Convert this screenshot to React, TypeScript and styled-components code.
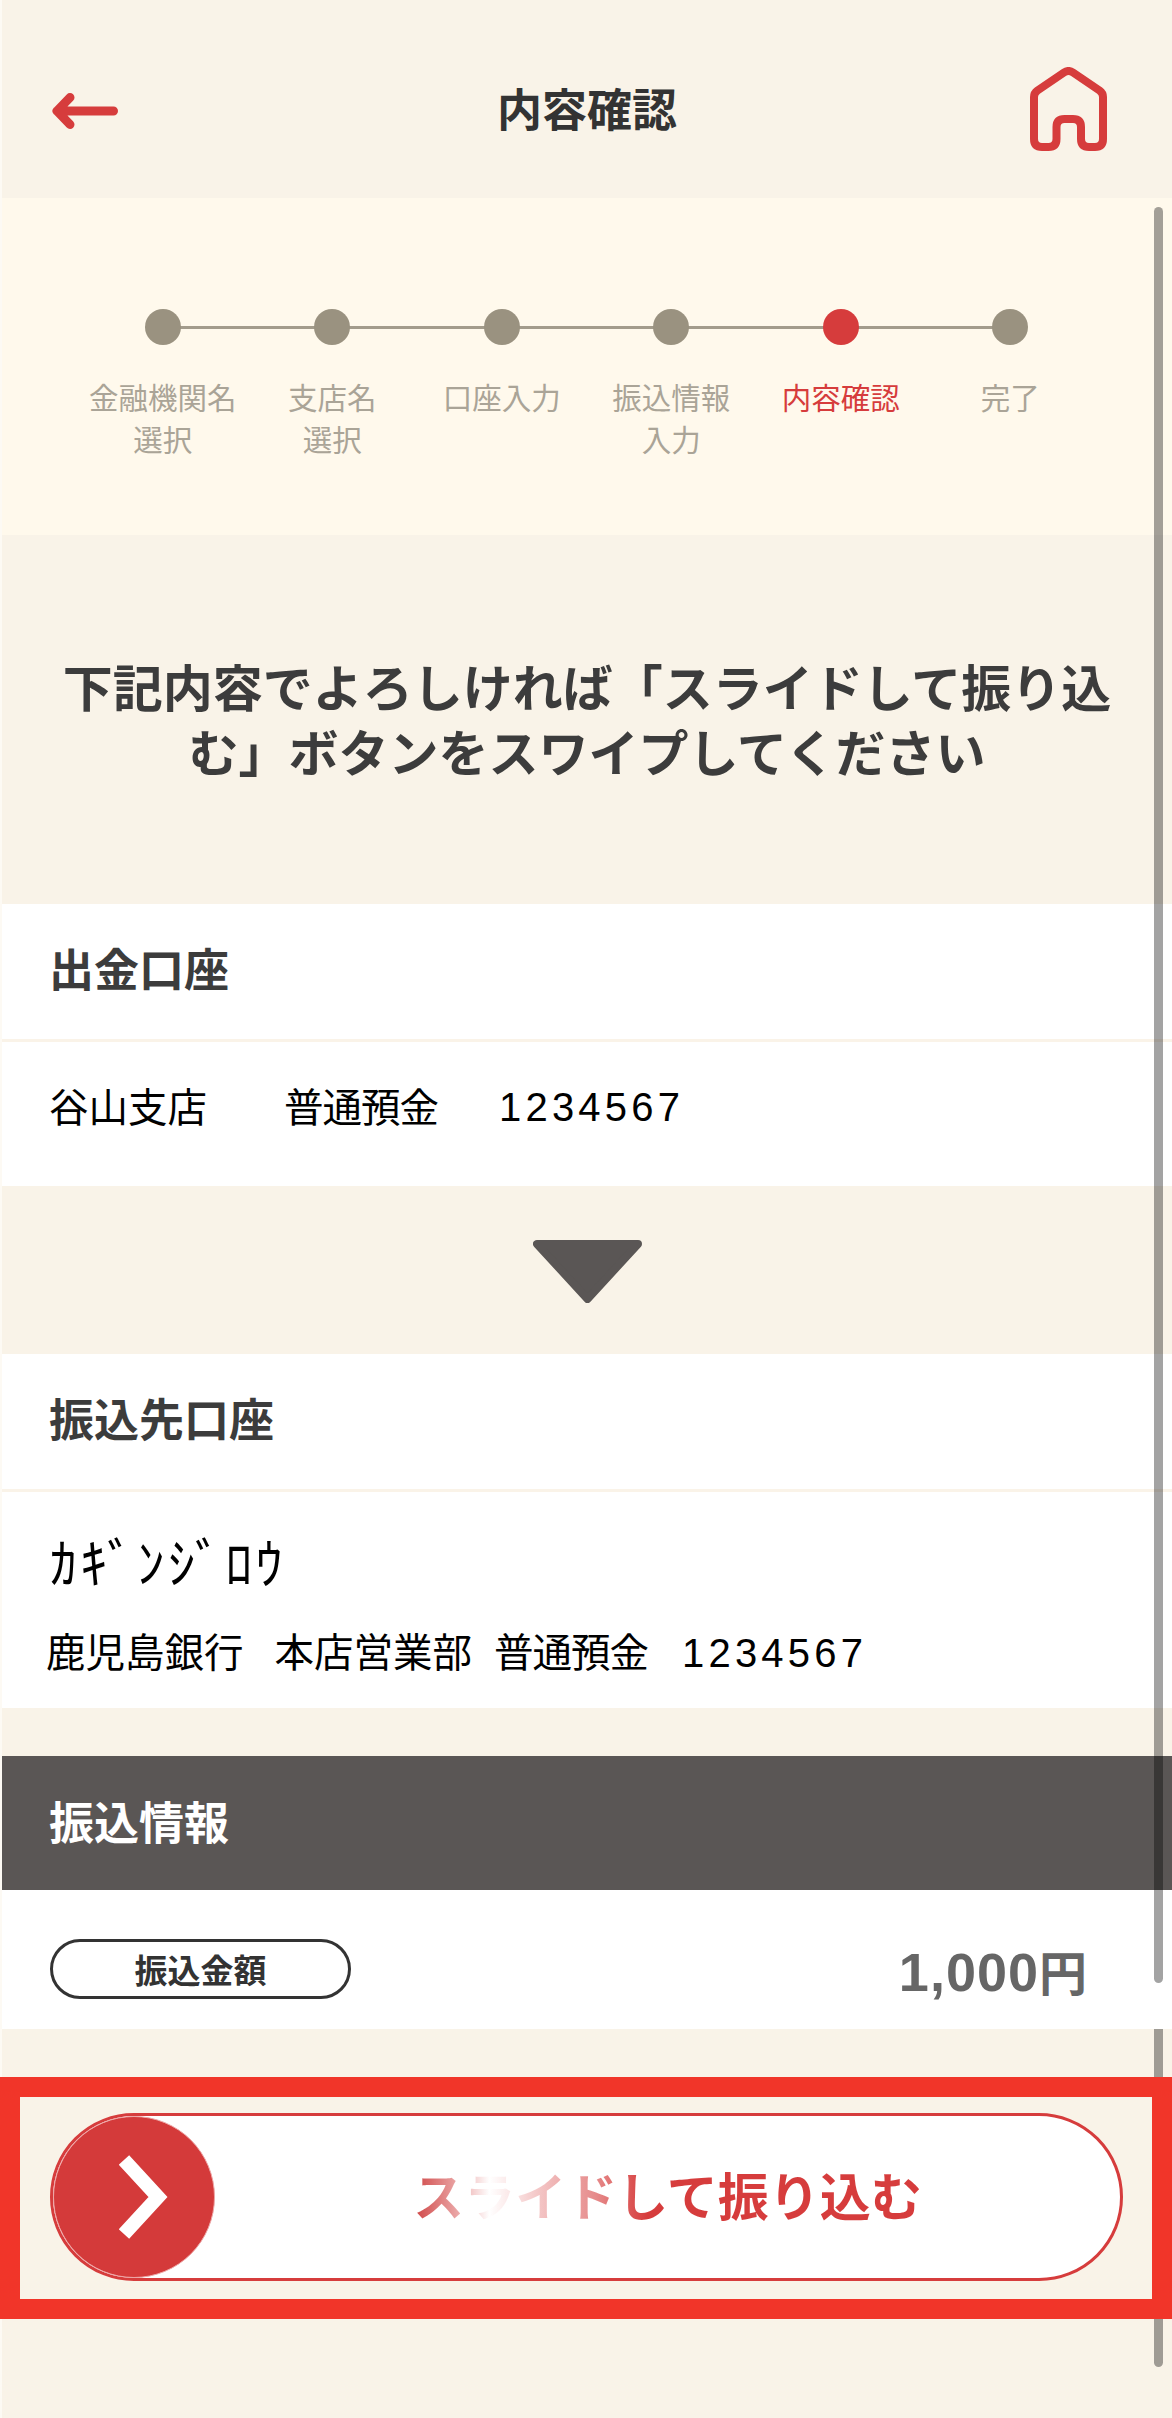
import styled, { createGlobalStyle } from "styled-components";

const steps = [
  ["金融機関名", "選択"],
  ["支店名", "選択"],
  ["口座入力"],
  ["振込情報", "入力"],
  ["内容確認"],
  ["完了"],
];
const activeStep = 4;

function App() {
  return (
    <Page>
      <GlobalStyle />
      <ScrollThumb $top={207} $height={1776} />
      <ScrollThumb $top={2029} $height={338} $flatTop />

      <Content>
        <Header>
          <BackIcon viewBox="0 0 66 36" fill="none">
            <path d="M61.5 18H5M18 4.5 5 18l13 13.5" stroke="#d63c3c" strokeWidth="9" strokeLinecap="round" strokeLinejoin="round" />
          </BackIcon>
          <HeaderTitle>内容確認</HeaderTitle>
          <HomeIcon viewBox="0 0 77 84" fill="none">
            <path
              d="M4 30Q4 26 7.5 23.5L34 5.5Q38.5 2.5 43 5.5L69.5 23.5Q73 26 73 30V72Q73 80 65 80H59Q51 80 51 72V60Q51 52 43 52H34.5Q26.5 52 26.5 60V72Q26.5 80 18.5 80H12Q4 80 4 72Z"
              stroke="#d63c3c"
              strokeWidth="8"
              strokeLinejoin="round"
            />
          </HomeIcon>
        </Header>

        <Stepper>
          {steps.map((lines, i) => (
            <Step key={i} $last={i === steps.length - 1}>
              <Dot $active={i === activeStep} />
              <StepLabel $active={i === activeStep}>
                {lines.map((line) => (
                  <div key={line}>{line}</div>
                ))}
              </StepLabel>
            </Step>
          ))}
        </Stepper>

        <Lead>
          下記内容でよろしければ「スライドして振り込む」ボタンをスワイプしてください
        </Lead>

        <Card>
          <CardHead>出金口座</CardHead>
          <AccountRow>
            <span>谷山支店</span>
            <DepositType>普通預金</DepositType>
            <AccountDigits>1234567</AccountDigits>
          </AccountRow>
        </Card>

        <ArrowBand>
          <svg width="109" height="63" viewBox="0 0 109 63">
            <path d="M4 4H105L54.5 59Z" fill="#5a5655" stroke="#5a5655" strokeWidth="8" strokeLinejoin="round" />
          </svg>
        </ArrowBand>

        <Card>
          <CardHead>振込先口座</CardHead>
          <PayeeBody>
            <PayeeName>ｶｷﾞﾝｼﾞﾛｳ</PayeeName>
            <PayeeRow>
              <span>鹿児島銀行</span>
              <span>本店営業部</span>
              <PayeeType>普通預金</PayeeType>
              <Digits>1234567</Digits>
            </PayeeRow>
          </PayeeBody>
        </Card>

        <DarkHead>振込情報</DarkHead>
        <AmountRow>
          <AmountTag>振込金額</AmountTag>
          <Amount>
            1,000<Yen>円</Yen>
          </Amount>
        </AmountRow>

        <Highlight>
          <SlideButton>
            <Knob>
              <svg width="50" height="84" viewBox="0 0 50 84" fill="none">
                <path d="M5 5 39 42 5 79" stroke="#fff" strokeWidth="14" />
              </svg>
            </Knob>
            <SlideLabel>
              <SlideText>スライドして振り込む</SlideText>
            </SlideLabel>
          </SlideButton>
        </Highlight>
      </Content>
    </Page>
  );
}

export default App;

const GlobalStyle = createGlobalStyle`
  body {
    margin: 0;
    background: #fdfaf4;
    font-family: "Liberation Sans", "Noto Sans CJK JP", sans-serif;
  }
`;

const Page = styled.div`
  position: relative;
  width: 1172px;
  height: 2418px;
  box-sizing: border-box;
  padding-left: 2px;
  overflow: hidden;
  background: #fdfaf4;
`;

const Content = styled.main`
  height: 100%;
  background: #f9f3e8;
`;

const ScrollThumb = styled.div<{ $top: number; $height: number; $flatTop?: boolean }>`
  position: absolute;
  z-index: 1;
  left: 1154px;
  top: ${(p) => p.$top}px;
  width: 9px;
  height: ${(p) => p.$height}px;
  background: rgba(0, 0, 0, 0.36);
  border-radius: ${(p) => (p.$flatTop ? "0 0 5px 5px" : "5px")};
`;

const Header = styled.header`
  height: 198px;
  box-sizing: border-box;
  padding: 24px 56px 0;
  display: grid;
  grid-template-columns: 1fr auto 1fr;
  align-items: center;
`;

const BackIcon = styled.svg`
  width: 66px;
  height: 36px;
  margin-left: -6px;
`;

const HomeIcon = styled.svg`
  width: 77px;
  height: 84px;
  justify-self: end;
  margin: 0 9px 4px 0;
`;

const HeaderTitle = styled.h1`
  margin: 2px 0 0;
  font-size: 45px;
  line-height: 60px;
  font-weight: 700;
  color: #333;
`;

const Stepper = styled.div`
  height: 337px;
  box-sizing: border-box;
  padding: 111px 0 0 76px;
  background: #fff9ec;
  display: grid;
  grid-template-columns: repeat(6, 169.5px);
  align-items: start;
`;

const Step = styled.div<{ $last: boolean }>`
  position: relative;
  display: flex;
  flex-direction: column;
  align-items: center;

  &::after {
    content: "";
    display: ${(p) => (p.$last ? "none" : "block")};
    position: absolute;
    left: 50%;
    top: 17px;
    width: 100%;
    height: 3px;
    background: #a39c8c;
  }
`;

const Dot = styled.div<{ $active: boolean }>`
  position: relative;
  z-index: 1;
  width: 36px;
  height: 36px;
  border-radius: 50%;
  background: ${(p) => (p.$active ? "#d63c3c" : "#9a9280")};
`;

const StepLabel = styled.div<{ $active: boolean }>`
  margin-top: 33px;
  font-size: 29.5px;
  line-height: 42px;
  text-align: center;
  white-space: nowrap;
  color: ${(p) => (p.$active ? "#d63c3c" : "#aaa497")};
`;

const Lead = styled.p`
  margin: 0;
  height: 369px;
  box-sizing: border-box;
  padding: 123px 49px 0;
  font-size: 50px;
  line-height: 65px;
  font-weight: 700;
  text-align: center;
  color: #3c3c3c;
`;

const Card = styled.section`
  background: #fff;
`;

const CardHead = styled.h2`
  margin: 0;
  height: 138px;
  box-sizing: border-box;
  padding: 0 47px 8px;
  display: flex;
  align-items: center;
  font-size: 45px;
  font-weight: 700;
  color: #3c3c3c;
  border-bottom: 3px solid #faf3e8;
`;

const AccountRow = styled.div`
  height: 144px;
  box-sizing: border-box;
  padding: 0 0 20px 47px;
  display: flex;
  align-items: center;
  gap: 77px;
  font-size: 39.5px;
  color: #000;
`;

const DepositType = styled.span`
  letter-spacing: -1px;
`;

const Digits = styled.span`
  font-size: 40px;
  letter-spacing: 4.2px;
`;

const AccountDigits = styled(Digits)`
  margin: 6px 0 0 -16px;
`;

const ArrowBand = styled.div`
  height: 168px;
  box-sizing: border-box;
  padding-top: 54px;
  display: flex;
  justify-content: center;
  align-items: flex-start;
`;

const PayeeBody = styled.div`
  height: 216px;
  box-sizing: border-box;
  padding: 38px 0 0 44px;
`;

const PayeeName = styled.div`
  margin-left: 4px;
  font-size: 54px;
  line-height: 70px;
  letter-spacing: 3.3px;
  color: #000;
`;

const PayeeRow = styled.div`
  margin-top: 25px;
  display: flex;
  align-items: center;
  gap: 31px;
  font-size: 39.5px;
  line-height: 56px;
  color: #000;
`;

const PayeeType = styled(DepositType)`
  margin: 0 3px 0 -9px;
`;

const DarkHead = styled.h2`
  margin: 48px 0 0;
  height: 134px;
  box-sizing: border-box;
  padding: 0 47px 6px;
  display: flex;
  align-items: center;
  font-size: 45px;
  font-weight: 700;
  color: #fff;
  background: #5a5655;
`;

const AmountRow = styled.div`
  height: 139px;
  box-sizing: border-box;
  padding: 49px 85px 0 48px;
  display: flex;
  align-items: flex-start;
  justify-content: space-between;
  background: #fff;
`;

const AmountTag = styled.div`
  width: 301px;
  height: 60px;
  box-sizing: border-box;
  border: 3px solid #333;
  border-radius: 30px;
  display: flex;
  align-items: center;
  justify-content: center;
  font-size: 33px;
  font-weight: 700;
  color: #333;
`;

const Amount = styled.div`
  margin-top: 3px;
  font-size: 54px;
  line-height: 60px;
  font-weight: 700;
  letter-spacing: 1px;
  color: #666;
`;

const Yen = styled.span`
  font-size: 48px;
  letter-spacing: 0;
`;

const Highlight = styled.div`
  position: relative;
  z-index: 2;
  margin: 48px 0 0 -2px;
  width: 1172px;
  height: 242px;
  box-sizing: border-box;
  border: 20px solid #f13529;
  padding: 16px 29px 0 30px;
`;

const SlideButton = styled.div`
  height: 168px;
  box-sizing: border-box;
  border: 3px solid #d63c3c;
  border-radius: 84px;
  background: #fff;
  display: flex;
  align-items: center;
`;

const Knob = styled.div`
  width: 162px;
  height: 162px;
  box-sizing: border-box;
  flex: none;
  border-radius: 50%;
  background: #d43a3a;
  border: 1px solid #eea6a6;
  display: flex;
  align-items: center;
  justify-content: center;

  svg {
    margin-left: 20px;
  }
`;

const SlideLabel = styled.div`
  flex: 1;
  display: flex;
  justify-content: center;
  padding-top: 4px;
`;

const SlideText = styled.span`
  font-size: 51px;
  line-height: 70px;
  font-weight: 700;
  color: transparent;
  background: linear-gradient(
    90deg,
    #cf4444 0%,
    #eeb4b4 10%,
    #ffffff 15%,
    #fbe8e8 19%,
    #f3c4c4 25%,
    #e68a8a 36%,
    #d63c3c 46%,
    #d63c3c 100%
  );
  -webkit-background-clip: text;
  background-clip: text;
`;
